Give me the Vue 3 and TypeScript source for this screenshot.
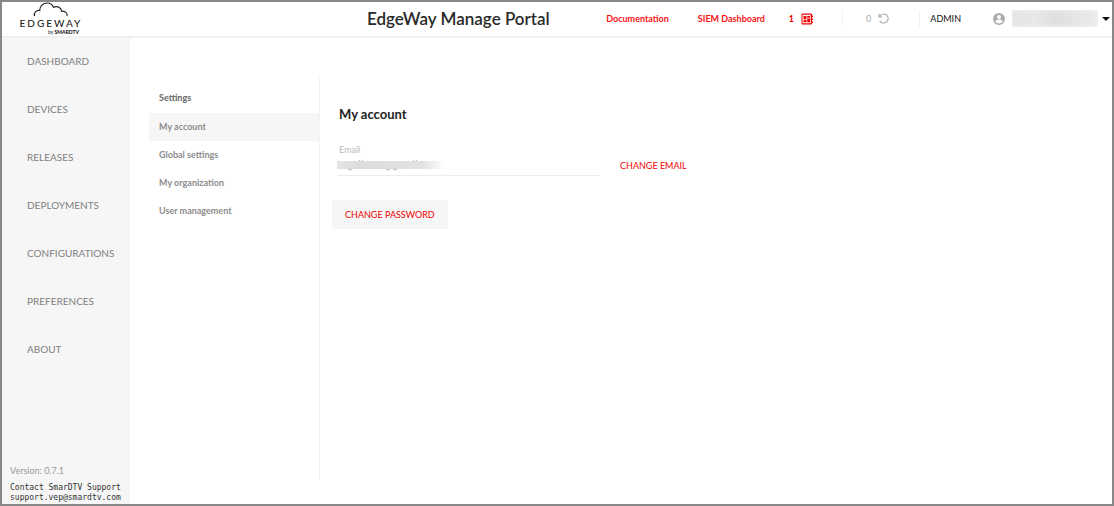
<script setup lang="ts">
import { ref } from 'vue'

interface SettingItem {
  id: string
  label: string
}

const mainMenu: string[] = [
  'Dashboard',
  'Devices',
  'Releases',
  'Deployments',
  'Configurations',
  'Preferences',
  'About',
]

const settings: SettingItem[] = [
  { id: 'account', label: 'My account' },
  { id: 'global', label: 'Global settings' },
  { id: 'organization', label: 'My organization' },
  { id: 'users', label: 'User management' },
]

const active = ref<string>('account')
</script>

<template>
  <div class="portal">
    <header class="topbar">
      <a class="logo" href="#" aria-label="EdgeWay by SmarDTV">
        <svg class="cloud" viewBox="0 0 36 15" aria-hidden="true">
          <path
            d="M1.500 14C.8 10.500 3 8.200 6.800 8.500C6.500 4 10 1 14.200 1C17.500 1 19.500 2.800 20.500 5.200C24.500 3.500 28.500 5.500 28.500 9.200C32 9 34.800 11 34 14"
          />
        </svg>
        <span class="logo-name">EDGEWAY</span>
        <span class="logo-by">by <b>SMARDTV</b></span>
      </a>
      <h1 class="title">EdgeWay Manage Portal</h1>
      <nav class="tools" aria-label="Tools">
        <a class="tool-link" href="#">Documentation</a>
        <a class="tool-link siem" href="#">SIEM Dashboard</a>
        <a class="counter alert" href="#" aria-label="1 device">
          <span>1</span>
          <svg width="12" height="12" viewBox="0 0 24 24" aria-hidden="true">
            <path
              fill-rule="evenodd"
              d="M3 1h17a2 2 0 0 1 2 2v2h2v3h-2v3h2v3h-2v3h2v3h-2v1a2 2 0 0 1-2 2H3a2 2 0 0 1-2-2V3a2 2 0 0 1 2-2zm0 2.500v17h16.500v-17zM5 6h6v6H5zm7.500 0H18v3.500h-5.500zm0 5H18v7.500h-5.500zM5 13.500h6v5H5z"
            />
          </svg>
        </a>
        <a class="counter idle" href="#" aria-label="0 pending">
          <span>0</span>
          <svg width="11" height="11" viewBox="0 0 22 22" aria-hidden="true">
            <path class="line" d="M2 1.500v6.500h6.500M3 7.500A9 9 0 1 1 3.500 15.500" />
          </svg>
        </a>
        <span class="role">ADMIN</span>
        <button class="user" type="button" aria-label="User menu">
          <svg width="12" height="12" viewBox="0 0 24 24" aria-hidden="true">
            <path
              fill-rule="evenodd"
              d="M12 0a12 12 0 1 0 0 24a12 12 0 1 0 0-24zm0 4a4 4 0 1 1 0 8a4 4 0 1 1 0-8zM4.500 17c.5-3 5-4 7.500-4s7 1 7.500 4c-1.500 2.500-4.500 4-7.500 4s-6-1.500-7.500-4z"
            />
          </svg>
          <span class="user-name"></span>
          <span class="caret"></span>
        </button>
      </nav>
    </header>

    <div class="body">
      <aside class="sidebar">
        <nav class="menu" aria-label="Main">
          <a v-for="entry in mainMenu" :key="entry" href="#">{{ entry }}</a>
        </nav>
        <footer class="about">
          <p class="version">Version: 0.7.1</p>
          <p class="support">Contact SmarDTV Support<br />support.vep@smardtv.com</p>
        </footer>
      </aside>

      <main class="content">
        <nav class="settings" aria-label="Settings">
          <h2>Settings</h2>
          <a
            v-for="item in settings"
            :key="item.id"
            href="#"
            :class="{ active: item.id === active }"
            @click.prevent="active = item.id"
            >{{ item.label }}</a
          >
        </nav>

        <section class="account">
          <h2>My account</h2>
          <div class="email-row">
            <div class="field">
              <label for="email">Email</label>
              <div class="masked">
                <input id="email" type="email" readonly />
                <svg class="mask-marks" width="84" height="12" viewBox="0 0 84 12" aria-hidden="true">
                  <path d="M9 9q2 2 4 0M47 9q2 2 4 0M54 9q2 2 4 0M20 .5h1M23 .5h1M74 .5h1M77 .5h1" />
                </svg>
              </div>
            </div>
            <button class="change-email" type="button">CHANGE EMAIL</button>
          </div>
          <button class="change-password" type="button">CHANGE PASSWORD</button>
        </section>
      </main>
    </div>
  </div>
</template>

<style>
body {
  margin: 0;
}
</style>

<style scoped>
.portal,
.portal * {
  box-sizing: border-box;
}

.portal {
  display: flex;
  flex-direction: column;
  min-height: 100vh;
  border: 2px solid #888;
  background: #fff;
  color: #222;
  font-family: Lato, 'Open Sans', sans-serif;
  font-size: 9px;
}

a {
  color: inherit;
  text-decoration: none;
}

h1,
h2,
p {
  margin: 0;
}

button {
  padding: 0;
  border: 0;
  background: none;
  font: inherit;
  cursor: pointer;
}

svg {
  display: block;
  fill: currentColor;
}

.topbar {
  display: flex;
  align-items: center;
  height: 36px;
  padding-bottom: 1px;
  border-bottom: 2px solid #f0f0f0;
}

.logo {
  display: flex;
  flex-direction: column;
  align-items: center;
  width: 64px;
  margin-left: 17px;
  color: #222;
}

.cloud {
  width: 36px;
  height: 15px;
  fill: none;
  stroke: #222;
  stroke-width: 1.2;
}

.logo-name {
  margin-top: 1px;
  font-size: 10px;
  line-height: 11px;
  font-weight: 500;
  letter-spacing: 2px;
}

.logo-by {
  align-self: flex-end;
  margin-right: 4px;
  font-size: 5px;
  line-height: 7px;
}

.logo-by b {
  font-weight: 900;
}

.title {
  margin-left: 284px;
  color: #2a2a2a;
  font-size: 17px;
  line-height: 24px;
  font-weight: 600;
  white-space: nowrap;
}

.tools {
  display: flex;
  align-items: center;
  margin-left: auto;
  white-space: nowrap;
}

.tool-link {
  color: #f81414;
  font-weight: 700;
}

.siem {
  margin-left: 29px;
}

.counter {
  display: flex;
  align-items: center;
  gap: 7px;
}

.alert {
  margin-left: 24px;
  padding-right: 29px;
  color: #f00000;
  font-weight: 700;
}

.idle {
  height: 16px;
  padding: 0 30px 0 23px;
  border: solid #eef3f3;
  border-width: 0 1px;
  color: #aaa;
}

.line {
  fill: none;
  stroke: currentColor;
  stroke-width: 2.2;
}

.role {
  margin-left: 10px;
  color: #111;
}

.user {
  display: flex;
  align-items: center;
  margin: 0 2px 0 32px;
  color: #aaa;
}

.user-name {
  width: 86px;
  height: 17px;
  margin: 0 4px 0 7px;
  background: linear-gradient(90deg, #e3e3e3, #e8e8e8 25%, #dfdfdf 50%, #e5e5e5 75%, #ebebeb);
  box-shadow: inset 0 0 5px #f4f4f4;
}

.caret {
  border: solid transparent;
  border-width: 4px 4px 0;
  border-top-color: #111;
}

.body {
  display: flex;
  flex: 1;
}

.sidebar {
  display: flex;
  flex-direction: column;
  justify-content: space-between;
  width: 128px;
  background: #f6f6f6;
}

.menu {
  display: flex;
  flex-direction: column;
  gap: 32px;
  padding: 15px 0 0 25px;
  color: #808080;
  font-size: 10px;
  line-height: 16px;
  text-transform: uppercase;
}

.about {
  padding: 0 0 1px 8px;
}

.version {
  color: #999;
  line-height: 14px;
}

.support {
  margin-top: 5px;
  color: #333;
  font-family: 'DejaVu Sans Mono', monospace;
  font-size: 8px;
  line-height: 10px;
  white-space: nowrap;
}

.content {
  display: flex;
  flex: 1;
  padding: 39px 19px 24px;
}

.settings {
  width: 171px;
  border-right: 1px solid #f0f4f4;
  color: #8c8c8c;
  font-weight: 700;
}

.settings h2 {
  padding: 12px 10px 6px;
  color: #666;
  font-size: 9px;
  line-height: 18px;
  font-weight: 700;
}

.settings a {
  display: block;
  padding: 0 10px;
  line-height: 28px;
}

.settings a.active {
  background: #f6f6f6;
}

.account {
  flex: 1;
  padding: 27px 0 0 12px;
}

.account h2 {
  margin-left: 7px;
  font-size: 13px;
  line-height: 20px;
  font-weight: 700;
}

.email-row {
  display: flex;
  align-items: center;
  gap: 20px;
  margin: 20px 0 24px 7px;
}

.field {
  flex: 0 1 261px;
}

.field label {
  display: block;
  color: #bbb;
  line-height: 12px;
}

.masked {
  position: relative;
  margin-left: -2px;
}

.masked input {
  display: block;
  width: 100%;
  height: 20px;
  padding: 0;
  border: 0;
  border-bottom: 1px solid #eee;
  outline: 0;
  background: linear-gradient(90deg, #e4e4e4, #ddd 20%, #e2e2e2 80%, #fff) 0 5px / 108px 8px no-repeat;
}

.mask-marks {
  position: absolute;
  top: 4px;
  left: 2px;
  fill: none;
  stroke: #bbb;
}

.change-email {
  margin-top: 12px;
  color: #f00000;
  line-height: 14px;
}

.change-password {
  padding: 0 13px;
  background: #f6f6f6;
  color: #f00000;
  line-height: 29px;
}
</style>
